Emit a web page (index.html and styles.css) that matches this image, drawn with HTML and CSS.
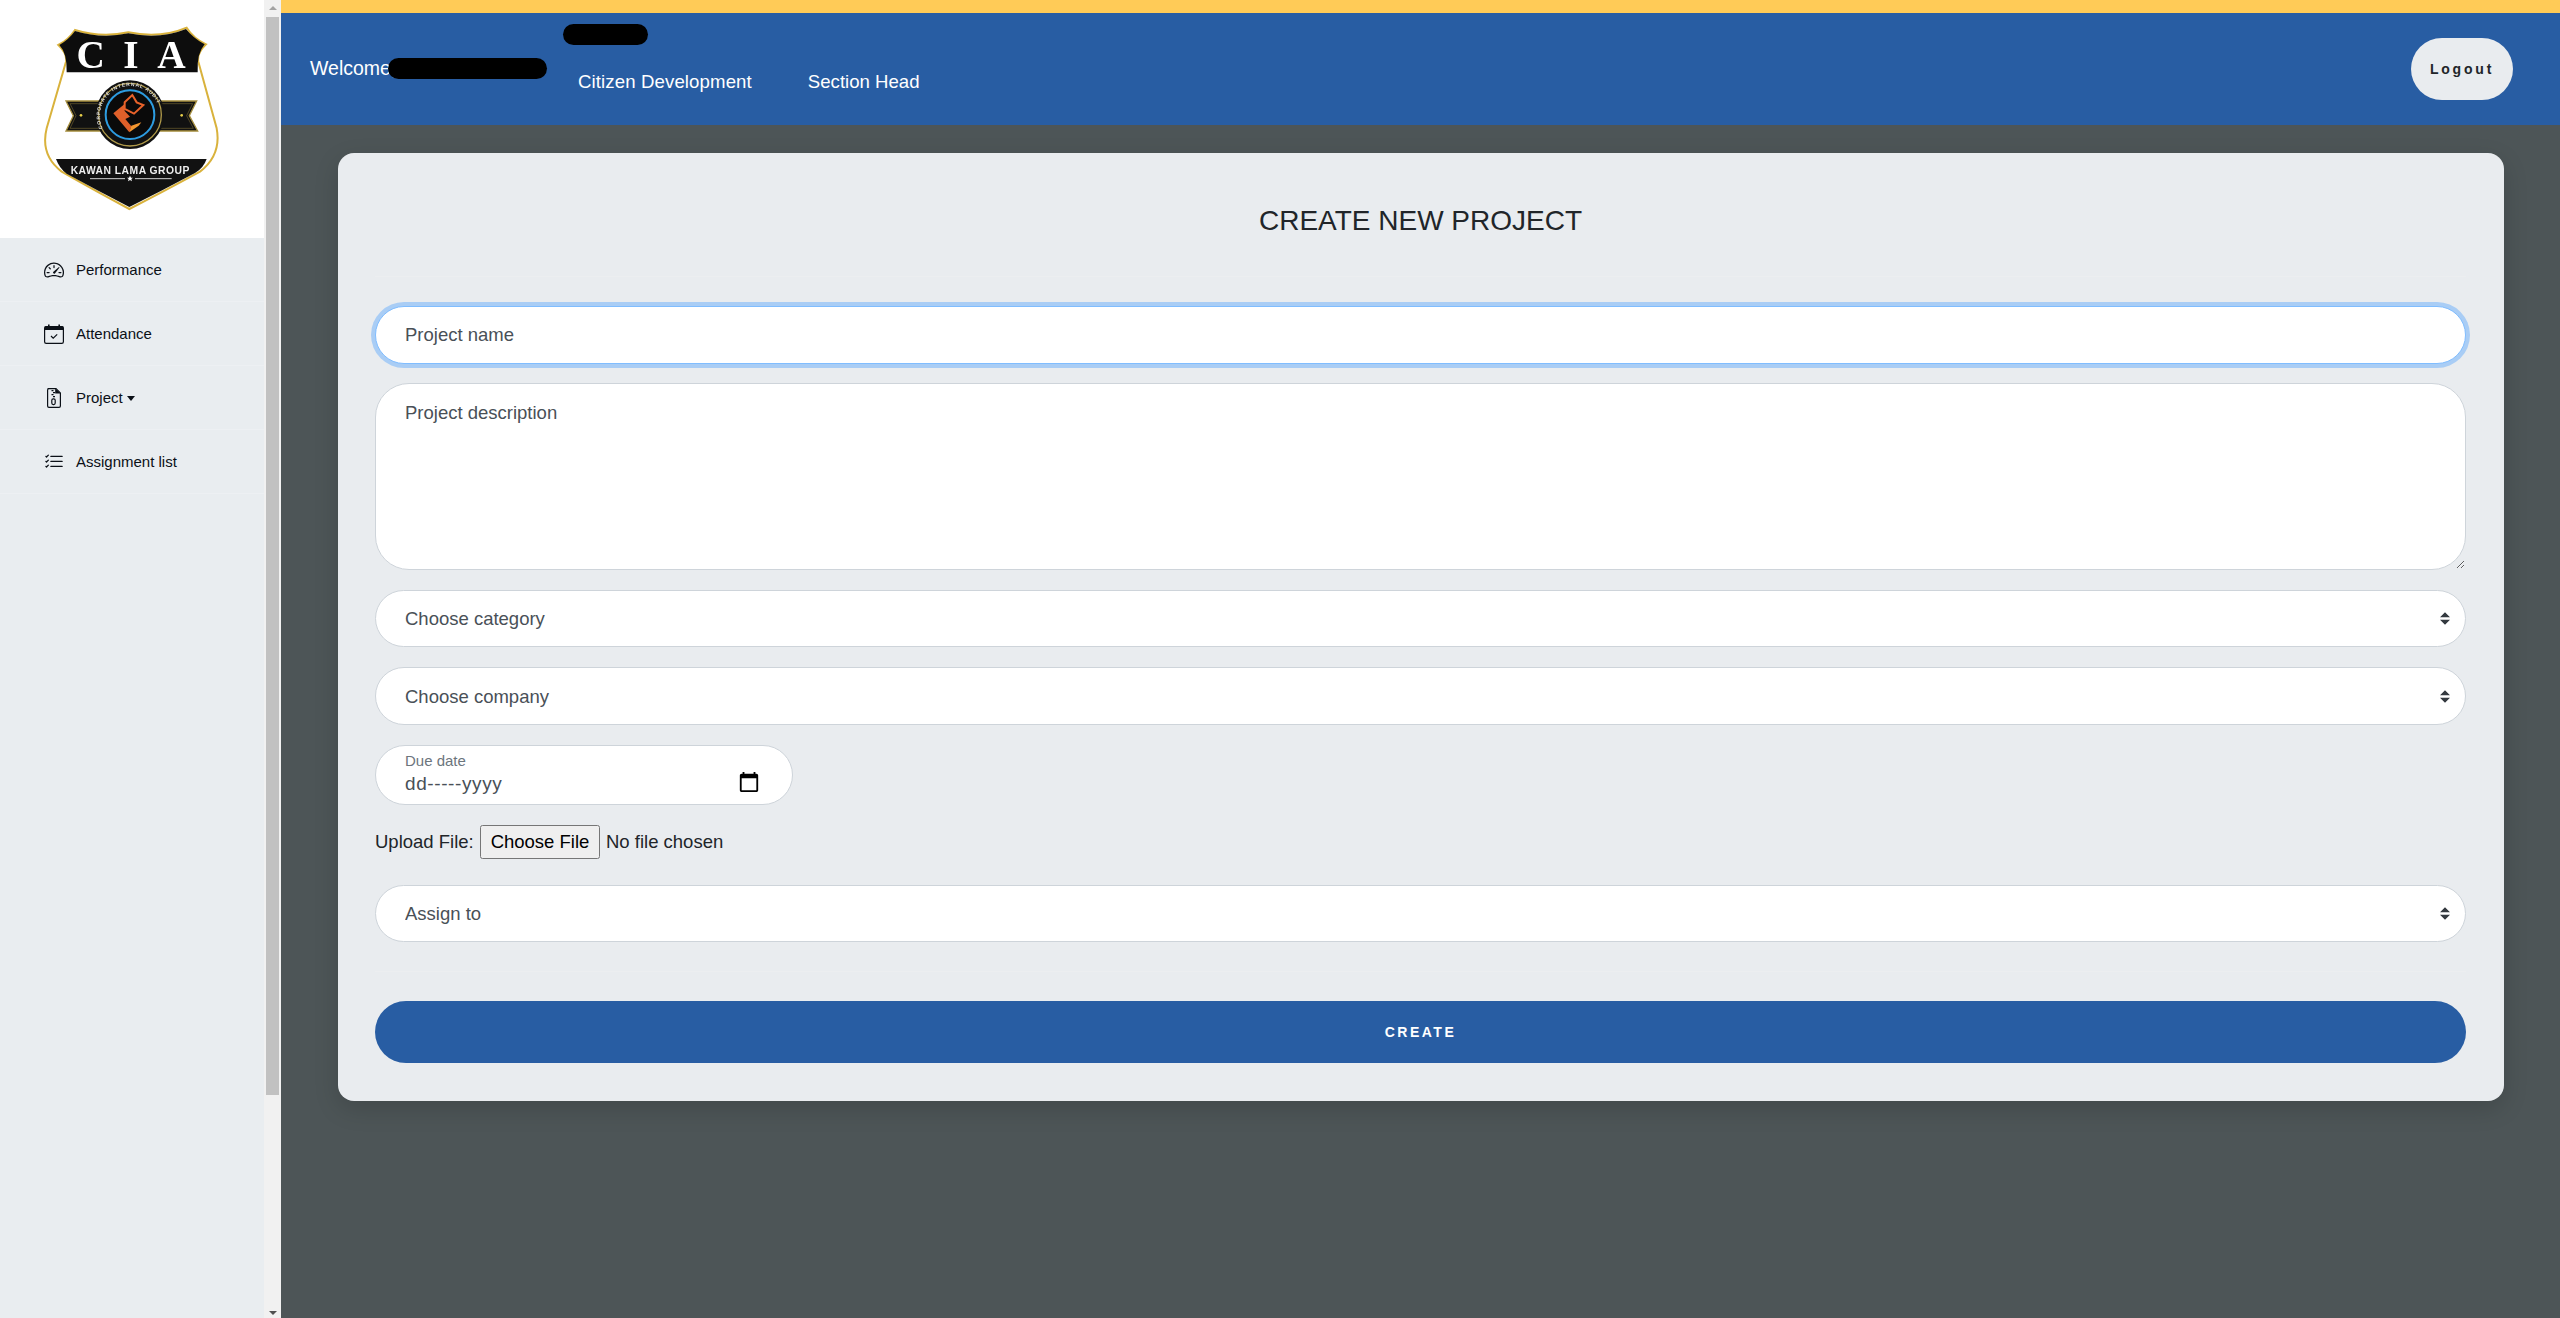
FILE: index.html
```html
<!DOCTYPE html>
<html lang="en">
<head>
<meta charset="utf-8">
<title>Create new project</title>
<link rel="stylesheet" href="styles.css">
</head>
<body>
<aside class="sidebar">
  <div class="side-content">
    <div class="logo-box">
      <svg class="logo" viewBox="0 0 600 600" width="200" height="200">
        <path d="M85 90Q115 75 135 45Q215 70 295 52Q390 72 470 38Q490 70 528 88Q500 115 505 140L560 340Q575 420 510 470Q400 530 298 582Q200 530 95 470Q30 420 50 340L108 140Q112 115 85 90Z" fill="#fff" stroke="#d9b23c" stroke-width="6"/>
        <path d="M88 90Q115 75 135 48Q215 72 295 55Q390 74 468 42Q490 70 524 88Q500 115 503 172H110Q112 115 88 90Z" fill="#0d0d0d"/>
        <path d="M78 432H530Q520 460 495 474Q400 525 298 576Q200 525 110 476Q88 460 78 432Z" fill="#111"/>
        <text class="logo-cia" x="182 303 424" y="158" text-anchor="middle">CIA</text>
        <path d="M108 258H500L478 302L503 348H108L130 302Z" fill="#111" stroke="#a58d3d" stroke-width="4"/>
        <path d="M120 266H488L470 302L490 340H120L138 302Z" fill="none" stroke="#6f6130" stroke-width="2"/>
        <circle cx="153" cy="301" r="4" fill="#e8cf4a"/>
        <circle cx="455" cy="301" r="4" fill="#e8cf4a"/>
        <circle cx="300" cy="299" r="103" fill="#111"/>
        <circle cx="300" cy="299" r="94" fill="none" stroke="#b09a4a" stroke-width="4"/>
        <circle cx="300" cy="299" r="73" fill="#0a0a0a" stroke="#2d9ce0" stroke-width="6"/>
        <path id="ringPath" d="M218 340A90 90 0 1 1 382 340" fill="none"/>
        <text class="logo-ring"><textPath href="#ringPath" textLength="282">CORPORATE INTERNAL AUDIT</textPath></text>
        <path d="M250 295L283 268L284 288L300 305L286 312L304 334L298 352Z" fill="#e0602a"/>
        <path d="M298 352L304 332L334 322L326 332Z" fill="#f3962f"/>
        <path d="M284 262L307 240L320 262L340 270L312 296L284 282Z" fill="none" stroke="#e8622a" stroke-width="6"/>
        <text class="logo-group" x="300" y="476" text-anchor="middle" textLength="356">KAWAN LAMA GROUP</text>
        <path d="M180 491H285M315 491H425" stroke="#cfcfcf" stroke-width="3"/>
        <path d="M300 482l3 6h6l-5 4 2 7-6-4-6 4 2-7-5-4h6z" fill="#fff"/>
      </svg>
    </div>
    <nav class="side-nav">
      <a class="side-item">
        <svg class="side-icon" viewBox="0 0 16 16" width="20" height="20" fill="currentColor"><path d="M8 4a.5.5 0 0 1 .5.5V6a.5.5 0 0 1-1 0V4.5A.5.5 0 0 1 8 4zM3.732 5.732a.5.5 0 0 1 .707 0l.915.914a.5.5 0 1 1-.708.708l-.914-.915a.5.5 0 0 1 0-.707zM2 10a.5.5 0 0 1 .5-.5h1.586a.5.5 0 0 1 0 1H2.5A.5.5 0 0 1 2 10zm9.5 0a.5.5 0 0 1 .5-.5h1.5a.5.5 0 0 1 0 1H12a.5.5 0 0 1-.5-.5zm.754-4.246a.389.389 0 0 0-.527-.02L7.547 9.31a.91.91 0 1 0 1.302 1.258l3.434-4.297a.389.389 0 0 0-.029-.518z"/><path fill-rule="evenodd" d="M0 10a8 8 0 1 1 15.547 2.661c-.442 1.253-1.845 1.602-2.932 1.25C11.309 13.488 9.475 13 8 13c-1.474 0-3.31.488-4.615.911-1.087.352-2.49.003-2.932-1.25A7.988 7.988 0 0 1 0 10zm8-7a7 7 0 0 0-6.603 9.329c.203.575.923.876 1.68.63C4.397 12.533 6.358 12 8 12s3.604.532 4.923.96c.757.245 1.477-.056 1.68-.631A7 7 0 0 0 8 3z"/></svg>
        <span>Performance</span>
      </a>
      <a class="side-item">
        <svg class="side-icon" viewBox="0 0 20 20" width="20" height="20"><rect x=".6" y="2.6" width="18.8" height="16.8" rx="1.6" fill="none" stroke="currentColor" stroke-width="1.2"/><path d="M.6 3.2a1 1 0 0 1 1-1h16.8a1 1 0 0 1 1 1V6H.6z" fill="currentColor"/><path d="M4 .4h1.6v3H4zM14.4.4H16v3h-1.6z" fill="currentColor"/><path d="M7 12l2.2 2.2L13.2 10.4" fill="none" stroke="currentColor" stroke-width="1.2"/></svg>
        <span>Attendance</span>
      </a>
      <a class="side-item">
        <svg class="side-icon" viewBox="0 0 20 20" width="20" height="20"><path d="M3.6.6H12L16.4 5V18a1.4 1.4 0 0 1-1.4 1.4H5A1.4 1.4 0 0 1 3.6 18V2A1.4 1.4 0 0 1 5 .6" fill="none" stroke="currentColor" stroke-width="1.2"/><path d="M11.2.6V5.600H16.400Z" fill="currentColor"/><path d="M7.500 2h2v1.300h-2zM9 4h2v1.300H9zM7.500 6h2v1.300h-2zM9 8h2v1.300H9z" fill="currentColor"/><rect x="7.800" y="10.800" width="3.400" height="5.800" rx="1.500" fill="none" stroke="currentColor" stroke-width="1.200"/></svg>
        <span>Project</span><i class="caret"></i>
      </a>
      <a class="side-item">
        <svg class="side-icon" viewBox="0 0 16 16" width="20" height="20" fill="currentColor"><path fill-rule="evenodd" d="M5 11.500a.500.500 0 0 1 .500-.500h9a.500.500 0 0 1 0 1h-9a.500.500 0 0 1-.500-.500zm0-4a.500.500 0 0 1 .500-.500h9a.500.500 0 0 1 0 1h-9a.500.500 0 0 1-.500-.500zm0-4a.500.500 0 0 1 .500-.500h9a.500.500 0 0 1 0 1h-9a.500.500 0 0 1-.500-.500zM3.854 2.146a.500.500 0 0 1 0 .708l-1.500 1.500a.500.500 0 0 1-.708 0l-.500-.500a.500.500 0 1 1 .708-.708L2 3.293l1.146-1.147a.500.500 0 0 1 .708 0zm0 4a.500.500 0 0 1 0 .708l-1.500 1.500a.500.500 0 0 1-.708 0l-.500-.500a.500.500 0 1 1 .708-.708L2 7.293l1.146-1.147a.500.500 0 0 1 .708 0zm0 4a.500.500 0 0 1 0 .708l-1.500 1.500a.500.500 0 0 1-.708 0l-.500-.500a.500.500 0 0 1 .708-.708l.146.147 1.146-1.147a.500.500 0 0 1 .708 0z"/></svg>
        <span>Assignment list</span>
      </a>
    </nav>
  </div>
  <div class="scrollbar">
    <div class="sb-btn"><i class="sb-up"></i></div>
    <div class="sb-thumb"></div>
    <div class="sb-space"></div>
    <div class="sb-btn sb-end"><i class="sb-down"></i></div>
  </div>
</aside>
<main class="main">
  <div class="topline"></div>
  <header class="header">
    <div class="welcome"><span class="welcome-text">Welcome,</span><span class="redact redact-name"></span></div>
    <div class="roles">
      <span class="redact redact-id"></span>
      <div class="role-row"><span class="role-team">Citizen Development</span><span>Section Head</span></div>
    </div>
    <button class="logout" type="button">Logout</button>
  </header>
  <section class="card">
    <h1 class="card-title">CREATE NEW PROJECT</h1>
    <div class="rule rule-top"></div>
    <form class="form">
      <input class="field field-focus" type="text" placeholder="Project name">
      <textarea class="field field-area" placeholder="Project description"></textarea>
      <select class="field field-select"><option>Choose category</option></select>
      <select class="field field-select field-tall"><option>Choose company</option></select>
      <div class="date-box">
        <div class="date-text">
          <span class="date-label">Due date</span>
          <span class="date-value">dd-----yyyy</span>
        </div>
        <svg class="date-icon" viewBox="0 0 24 24" width="22" height="22"><path d="M20 3h-1V1h-2v2H7V1H5v2H4c-1.100 0-2 .9-2 2v16c0 1.100.9 2 2 2h16c1.100 0 2-.9 2-2V5c0-1.100-.9-2-2-2zm0 18H4V8h16v13z"/></svg>
      </div>
      <div class="upload"><label class="upload-label">Upload File:</label><input class="upload-input" type="file"></div>
      <select class="field field-select field-assign"><option>Assign to</option></select>
      <div class="rule rule-bottom"></div>
      <button class="create" type="button">CREATE</button>
    </form>
  </section>
</main>
</body>
</html>
```
FILE: styles.css
```css
* { box-sizing: border-box; }
html, body { margin: 0; height: 100%; }
body {
  display: flex;
  height: 1318px;
  overflow: hidden;
  font-family: "Liberation Sans", Arial, sans-serif;
  background: #4d5557;
  color: #212529;
}

/* sidebar */
.sidebar { width: 281px; flex: none; display: flex; background: #e9edf0; }
.side-content { width: 264px; flex: none; }
.logo-box { height: 238px; padding: 15px 34px 23px 30px; background: #fff; }
.logo { display: block; filter: blur(.35px); }
.logo-cia { font-family: "Liberation Serif", serif; font-weight: 700; font-size: 118px; fill: #fff; }
.logo-ring { font-size: 15px; fill: #ddd; font-weight: 700; }
.logo-group { font-size: 31px; font-weight: 700; fill: #eee; }
.side-item {
  display: flex;
  align-items: center;
  height: 64px;
  padding-left: 44px;
  font-size: 15px;
  color: #0b1017;
  border-bottom: 1px solid #edf0f3;
}
.side-icon { margin-right: 12px; flex: none; }
.caret {
  margin-left: 4px;
  margin-top: 1px;
  border-top: 5px solid #0b1017;
  border-left: 4.500px solid transparent;
  border-right: 4.500px solid transparent;
}
.scrollbar { width: 17px; flex: none; display: flex; flex-direction: column; background: #f1f1f1; }
.sb-btn { height: 17px; flex: none; display: flex; align-items: center; justify-content: center; }
.sb-up { border-bottom: 4px solid #a3a3a3; border-left: 4px solid transparent; border-right: 4px solid transparent; margin-top: -1px; }
.sb-down { border-top: 4px solid #505050; border-left: 4px solid transparent; border-right: 4px solid transparent; margin-top: 7px; }
.sb-thumb { height: 1078px; margin: 0 2px; background: #c1c1c1; flex: none; }
.sb-space { flex: 1; }

/* main */
.main { flex: 1; min-width: 0; }
.topline { height: 13px; background: #ffcb57; }
.header {
  height: 112px;
  display: flex;
  align-items: flex-start;
  padding: 0 47px 0 29px;
  background: #285da3;
  color: #fff;
  font-size: 18.600px;
}
.welcome { display: flex; align-items: center; margin-top: 45px; height: 21px; }
.welcome-text { width: 78px; font-size: 19.500px; flex: none; white-space: nowrap; }
.redact { display: block; background: #000; border-radius: 11px; height: 21px; }
.redact-name { width: 159px; }
.roles { margin-left: 16px; margin-top: 11px; }
.redact-id { width: 85px; }
.role-row { display: flex; gap: 56px; margin-top: 26px; padding-left: 15px; line-height: 22px; white-space: nowrap; }
.role-team { letter-spacing: .12px; }
.logout {
  margin-left: auto;
  margin-top: 25px;
  width: 102px;
  height: 62px;
  padding: 0;
  border: 0;
  border-radius: 31px;
  background: #e9ecef;
  color: #212529;
  font: 700 14px "Liberation Sans", Arial, sans-serif;
  letter-spacing: 2.800px;
}

/* card */
.card {
  margin: 28px 56px 0 57px;
  height: 948px;
  padding: 48px 38px 0 37px;
  background: #e9ecef;
  border-radius: 16px;
  box-shadow: 0 8px 24px rgba(0, 0, 0, .15);
}
.card-title {
  margin: 0;
  height: 75px;
  font-size: 28px;
  font-weight: 400;
  line-height: 40px;
  text-align: center;
}
.rule { height: 1px; background: #eceef0; }
.rule-top { margin-bottom: 29px; }
.form { display: flex; flex-direction: column; align-items: stretch; }
.field {
  display: block;
  width: 100%;
  height: 58px;
  padding: 0 29px;
  border: 1px solid #ced4da;
  border-radius: 30px;
  background: #fff;
  color: #495057;
  font: 18.500px "Liberation Sans", Arial, sans-serif;
  outline: 0;
}
.field::placeholder { color: #495057; opacity: 1; }
.field-focus { border-color: #80bdff; box-shadow: 0 0 0 4px #a9cdf5; }
.field-area { height: 187px; margin-top: 19px; padding-top: 15px; padding-bottom: 15px; line-height: 27px; border-radius: 34px; resize: vertical; }
.field-select {
  height: 57px;
  margin-top: 20px;
  appearance: none;
  background: #fff url("data:image/svg+xml,%3csvg xmlns='http://www.w3.org/2000/svg' width='4' height='5' viewBox='0 0 4 5'%3e%3cpath fill='%23343a40' d='M2 0L0 2h4zm0 5L0 3h4z'/%3e%3c/svg%3e") no-repeat right 15px center / 10px 13px;
}
.field-tall { height: 58px; }
.date-box {
  display: flex;
  align-items: flex-start;
  justify-content: space-between;
  width: 418px;
  height: 60px;
  margin-top: 20px;
  padding: 6px 32px 0 29px;
  border: 1px solid #ced4da;
  border-radius: 30px;
  background: #fff;
}
.date-text { display: flex; flex-direction: column; }
.date-label { font-size: 15px; line-height: 17px; color: #6c757d; }
.date-value { font-size: 19px; line-height: 27px; color: #495057; letter-spacing: .6px; margin-top: 1px; }
.date-icon { margin-top: 19px; flex: none; }
.upload { display: flex; align-items: center; height: 34px; margin-top: 20px; font-size: 18.500px; color: #212529; }
.upload-label { width: 105px; flex: none; }
.upload-input { font: 18.500px "Liberation Sans", Arial, sans-serif; color: #212529; }
.upload-input::file-selector-button { height: 34px; width: 120px; padding: 0; margin-right: 6px; font: inherit; }
.field-assign { margin-top: 26px; }
.rule-bottom { margin-top: 29px; margin-bottom: 29px; }
.create {
  height: 62px;
  border: 0;
  border-radius: 31px;
  background: #285da3;
  color: #fff;
  font: 700 14px "Liberation Sans", Arial, sans-serif;
  letter-spacing: 2.500px;
}
```
